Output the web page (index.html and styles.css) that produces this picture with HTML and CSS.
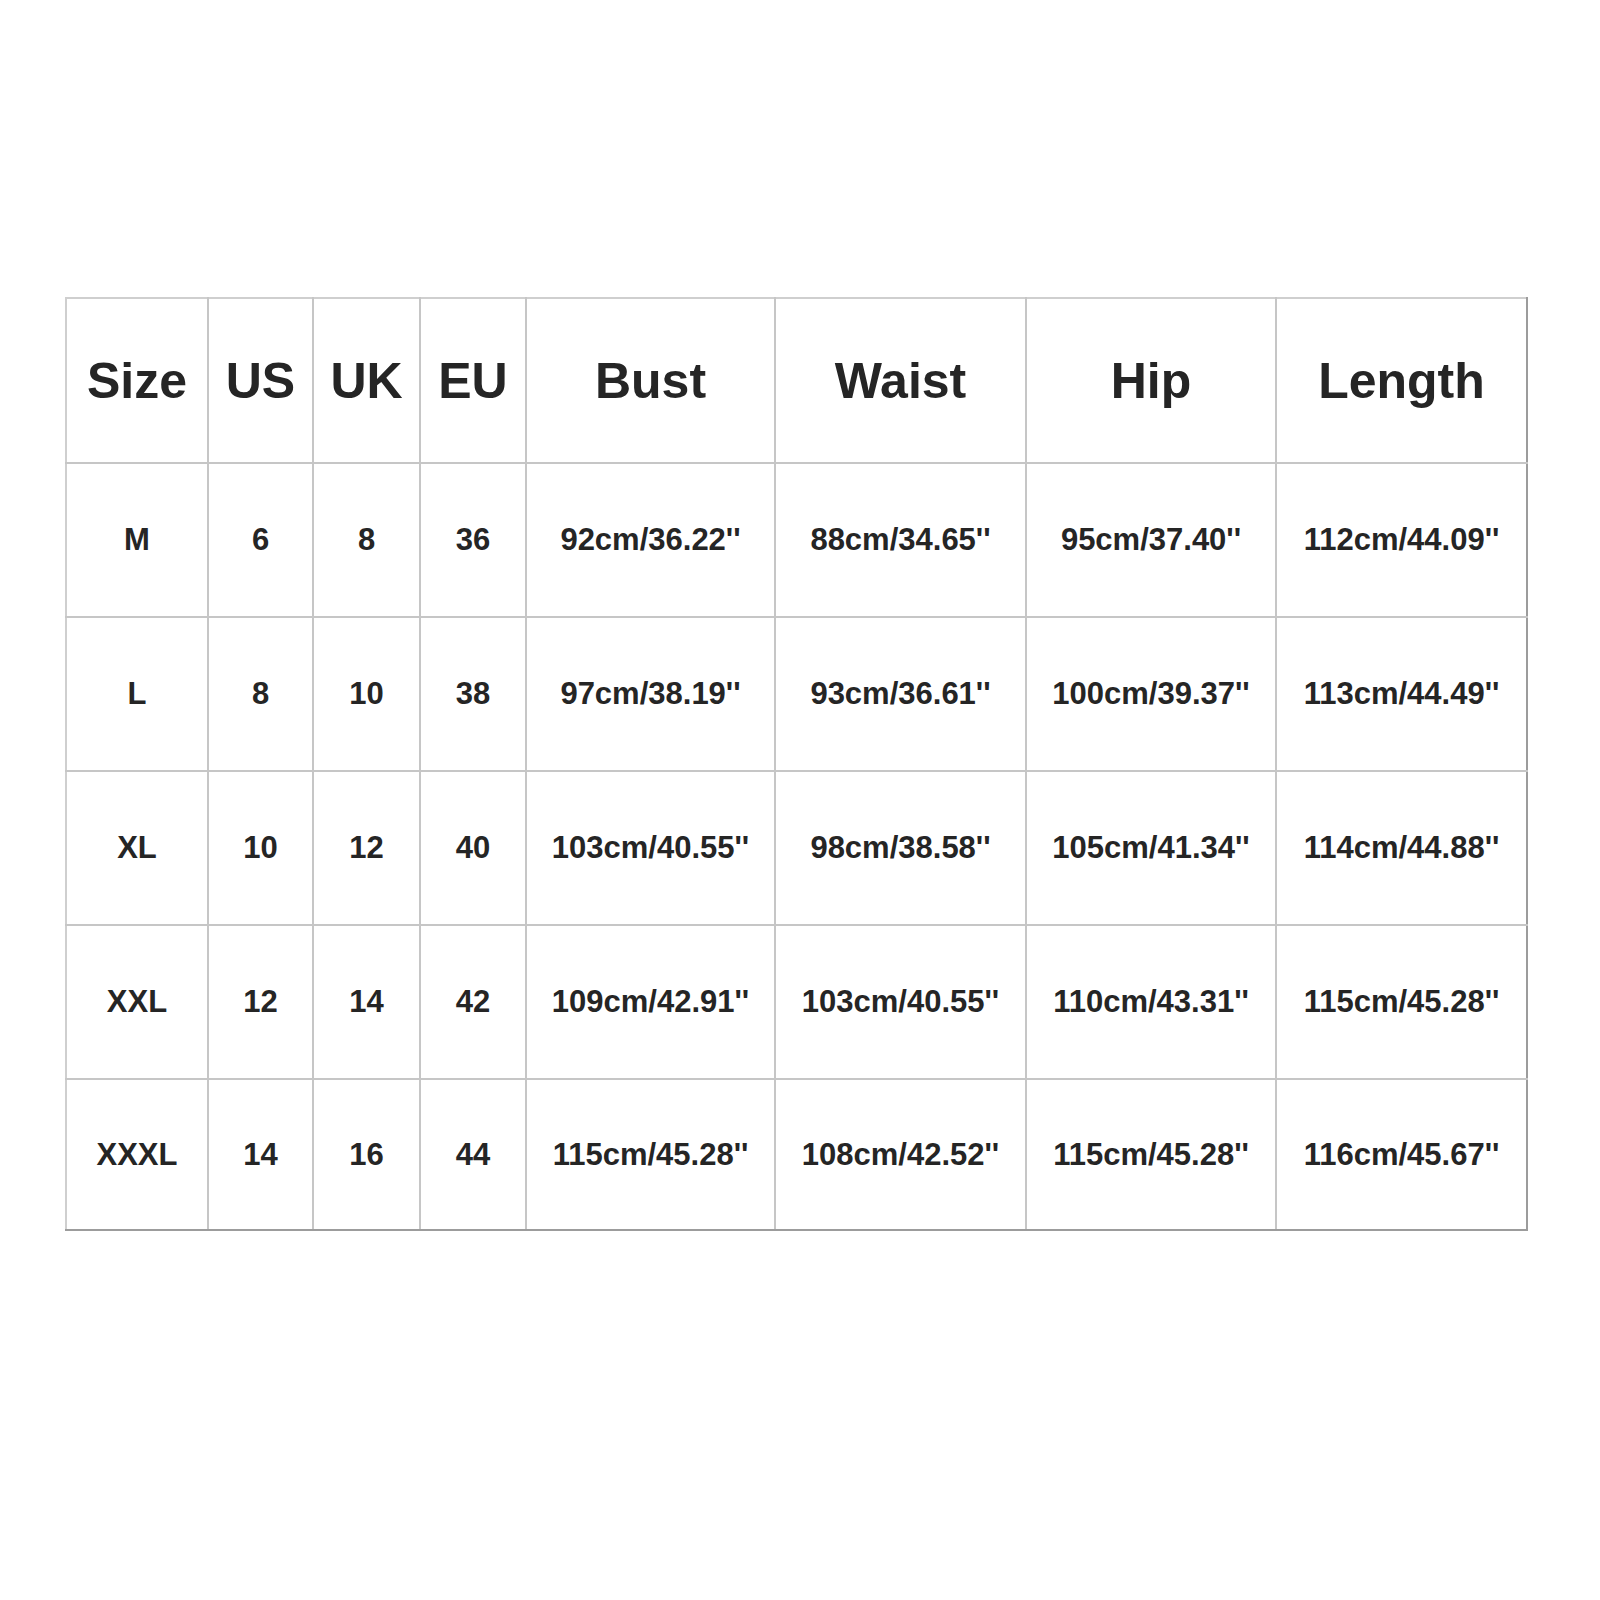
FILE: index.html
```html
<!DOCTYPE html>
<html>
<head>
<meta charset="utf-8">
<link rel="stylesheet" href="styles.css">
</head>
<body>
<table class="size-chart">
  <colgroup>
    <col class="c-size"><col class="c-us"><col class="c-uk"><col class="c-eu">
    <col class="c-bust"><col class="c-waist"><col class="c-hip"><col class="c-len">
  </colgroup>
  <thead>
    <tr class="head-row">
      <th>Size</th><th>US</th><th>UK</th><th>EU</th><th>Bust</th><th>Waist</th><th>Hip</th><th>Length</th>
    </tr>
  </thead>
  <tbody>
    <tr><td>M</td><td>6</td><td>8</td><td>36</td><td>92cm/36.22''</td><td>88cm/34.65''</td><td>95cm/37.40''</td><td>112cm/44.09''</td></tr>
    <tr><td>L</td><td>8</td><td>10</td><td>38</td><td>97cm/38.19''</td><td>93cm/36.61''</td><td>100cm/39.37''</td><td>113cm/44.49''</td></tr>
    <tr><td>XL</td><td>10</td><td>12</td><td>40</td><td>103cm/40.55''</td><td>98cm/38.58''</td><td>105cm/41.34''</td><td>114cm/44.88''</td></tr>
    <tr><td>XXL</td><td>12</td><td>14</td><td>42</td><td>109cm/42.91''</td><td>103cm/40.55''</td><td>110cm/43.31''</td><td>115cm/45.28''</td></tr>
    <tr class="last-row"><td>XXXL</td><td>14</td><td>16</td><td>44</td><td>115cm/45.28''</td><td>108cm/42.52''</td><td>115cm/45.28''</td><td>116cm/45.67''</td></tr>
  </tbody>
</table>
</body>
</html>
```
FILE: styles.css
```css
html, body {
  margin: 0;
  padding: 0;
  background: #ffffff;
}
body {
  padding: 297px 0 0 65px;
  font-family: "Liberation Sans", Arial, sans-serif;
  color: #252525;
}
.size-chart {
  border-collapse: collapse;
  table-layout: fixed;
  width: 1461px;
  border-top: 2px solid #cfcfcf;
  border-left: 2px solid #cfcfcf;
  border-right: 2px solid #9c9c9c;
  border-bottom: 2px solid #9c9c9c;
}
.c-size { width: 142px; }
.c-us { width: 105px; }
.c-uk { width: 107px; }
.c-eu { width: 106px; }
.c-bust { width: 249px; }
.c-waist { width: 251px; }
.c-hip { width: 250px; }
.c-len { width: 251px; }
.size-chart th,
.size-chart td {
  border: 2px solid #c6c6c6;
  text-align: center;
  vertical-align: middle;
  padding: 0;
  font-weight: bold;
  white-space: nowrap;
}
.size-chart th {
  font-size: 50px;
  height: 163px;
}
.size-chart td {
  font-size: 31px;
  height: 152px;
}
.size-chart .last-row td {
  height: 149px;
  border-bottom: 2px solid #9c9c9c;
}
.size-chart th:last-child,
.size-chart td:last-child {
  border-right: 2px solid #9c9c9c;
}
.head-row th {
  border-top: 2px solid #cfcfcf;
}
.size-chart th:first-child,
.size-chart td:first-child {
  border-left: 2px solid #cfcfcf;
}
```
